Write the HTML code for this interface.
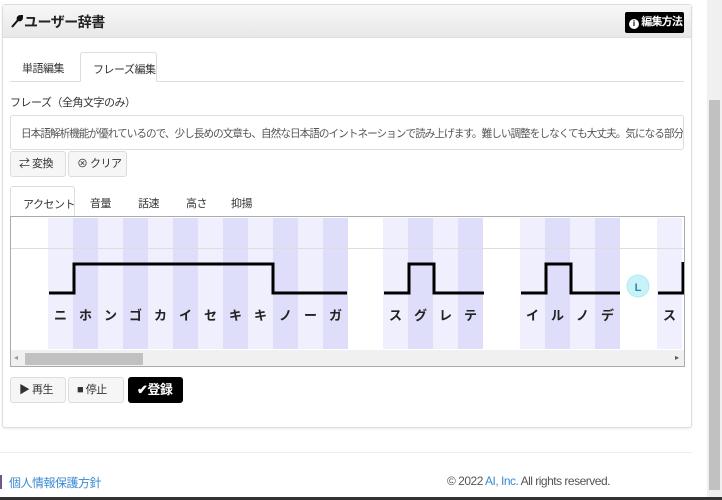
<!DOCTYPE html><html><head><meta charset="utf-8"><style>
*{box-sizing:border-box;margin:0;padding:0}
body{width:722px;height:500px;overflow:hidden;background:#fff;font-family:"Liberation Sans","Noto Sans CJK JP",sans-serif;font-size:12px;color:#333;position:relative;white-space:nowrap}
.abs{position:absolute}
.panel{left:2px;top:4px;width:690px;height:424px;border:1px solid #ddd;border-radius:3px;box-shadow:0 1px 2px rgba(0,0,0,.08)}
.hdr{left:0;top:0;width:688px;height:33px;background:linear-gradient(#f7f7f7,#e8e8e8);border-bottom:1px solid #ddd}
.btn{position:absolute;height:26px;border:1px solid #ddd;border-radius:3px;background:#f6f6f6;font-size:11px;line-height:24px;padding:0 0 0 8px;color:#333;letter-spacing:-0.5px;overflow:hidden}
.col{position:absolute;top:1px;width:25px;height:131px}
.a{background:#efeffd}.b{background:#dedefb}
.ch{position:absolute;top:88px;width:25px;text-align:center;font-size:13px;font-weight:bold;color:#222}
.t{font-size:11px;letter-spacing:-0.5px}
</style></head><body>
<div class="abs panel">
 <div class="abs hdr">
  <svg class="abs" style="left:8px;top:10px" width="12" height="13" viewBox="0 0 12 13"><path d="M1 12L7 5M7 5C6 3 7 1 10 1L8 3L9 4L11 2C11 5 9 6 7 5" stroke="#111" stroke-width="2" fill="#111"/></svg>
  <div class="abs" style="left:21px;top:7px;font-size:14px;font-weight:bold;color:#222;letter-spacing:-0.5px">ユーザー辞書</div>
  <div class="abs" style="left:622px;top:7px;width:59px;height:21px;background:#000;border-radius:2px;color:#fff;font-size:11px;font-weight:bold;line-height:21px;padding-left:4px;letter-spacing:-0.8px"><span style="display:inline-block;width:10px;height:10px;border-radius:50%;background:#fff;color:#000;font-size:8px;line-height:10px;text-align:center;vertical-align:-1px;letter-spacing:0">i</span> 編集方法</div>
 </div>
</div>
<div class="abs" style="left:10px;top:81px;width:674px;border-top:1px solid #ddd"></div>
<div class="abs t" style="left:22px;top:60px">単語編集</div>
<div class="abs t" style="left:80px;top:52px;width:77px;height:30px;border:1px solid #ddd;border-bottom:1px solid #fff;border-radius:3px 3px 0 0;background:#fff;padding:8px 0 0 12px">フレーズ編集</div>
<div class="abs t" style="left:10px;top:94px">フレーズ（全角文字のみ）</div>
<div class="abs" style="left:10px;top:115px;width:674px;height:35px;border:1px solid #ddd;border-radius:3px;padding:10px 0 0 10px;font-size:10.6px;letter-spacing:-0.95px;color:#555;overflow:hidden">日本語解析機能が優れているので、少し長めの文章も、自然な日本語のイントネーションで読み上げます。難しい調整をしなくても大丈夫。気になる部分も</div>
<div class="btn" style="left:10px;top:151px;width:56px">⇄ 変換</div>
<div class="btn" style="left:68px;top:151px;width:59px">⊗ クリア</div>
<div class="abs t" style="left:10px;top:186px;width:65px;height:31px;border:1px solid #ddd;border-bottom:none;border-radius:3px 3px 0 0;padding:9px 0 0 12px;background:#fff">アクセント</div>
<div class="abs t" style="left:90px;top:195px">音量</div>
<div class="abs t" style="left:138px;top:195px">話速</div>
<div class="abs t" style="left:186px;top:195px">高さ</div>
<div class="abs t" style="left:231px;top:195px">抑揚</div>
<div class="abs" style="left:10px;top:216px;width:675px;height:151px;border:1px solid #aaa;overflow:hidden;background:#fff">
 <div id="cols"></div>
 <div class="abs" style="left:0;top:31px;width:675px;border-top:1px solid #ddd"></div>
 <svg class="abs" style="left:0;top:0" width="675" height="135"><g fill="none" stroke="#000" stroke-width="3">
 <path d="M38 76H63V47H262V76H336"/><path d="M373 76H398V47H423V76H473"/><path d="M510 76H535V47H560V76H609"/><path d="M647 76H672V45"/></g>
 <circle cx="627" cy="69" r="11" fill="#c9f1fa" stroke="#aee" /><text x="627" y="74" font-size="11" font-weight="bold" text-anchor="middle" fill="#2a8aa0" font-family="Liberation Sans">L</text></svg>
 <div class="abs" style="left:0;top:133px;width:675px;height:17px;background:#f0f0f0"></div>
 <div class="abs" style="left:14px;top:136px;width:118px;height:12px;background:#c1c1c1"></div>
 <div class="abs" style="left:3px;top:136px;font-size:8px;color:#999">◂</div>
 <div class="abs" style="left:664px;top:136px;font-size:8px;color:#555">▸</div>
</div>
<div class="btn" style="left:10px;top:377px;width:56px">▶ 再生</div>
<div class="btn" style="left:68px;top:377px;width:56px">■ 停止</div>
<div class="btn" style="left:128px;top:377px;width:55px;background:#000;color:#fff;border-color:#000;font-weight:bold;font-size:13px">✔登録</div>
<div class="abs" style="left:0;top:452px;width:692px;border-top:1px solid #eee"></div>
<div class="abs" style="left:0;top:475px;width:2px;height:14px;background:#6a5a8a"></div>
<div class="abs t" style="left:9px;top:474px;font-size:12px;color:#3a8ad0">個人情報保護方針</div>
<div class="abs t" style="left:447px;top:474px;font-size:12px;color:#555">© 2022 <span style="color:#3a8ad0">AI, Inc.</span> All rights reserved.</div>
<div class="abs" style="left:707px;top:0;width:15px;height:500px;background:#f0f0f0"></div>
<div class="abs" style="left:709px;top:100px;width:11px;height:390px;background:#c1c1c1"></div>
<div class="abs" style="left:0;top:497px;width:722px;height:3px;background:#333"></div>
<script>
var h='',g=[[37,'ニホンゴカイセキキノーガ'],[372,'スグレテ'],[509,'イルノデ'],[646,'ス']];
g.forEach(function(x){for(var i=0;i<x[1].length;i++){var l=x[0]+i*25;h+='<div class="col '+(i%2?'b':'a')+'" style="left:'+l+'px"></div><div class="ch" style="left:'+l+'px">'+x[1][i]+'</div>';}});
document.getElementById('cols').innerHTML=h;
</script>
</body></html>
